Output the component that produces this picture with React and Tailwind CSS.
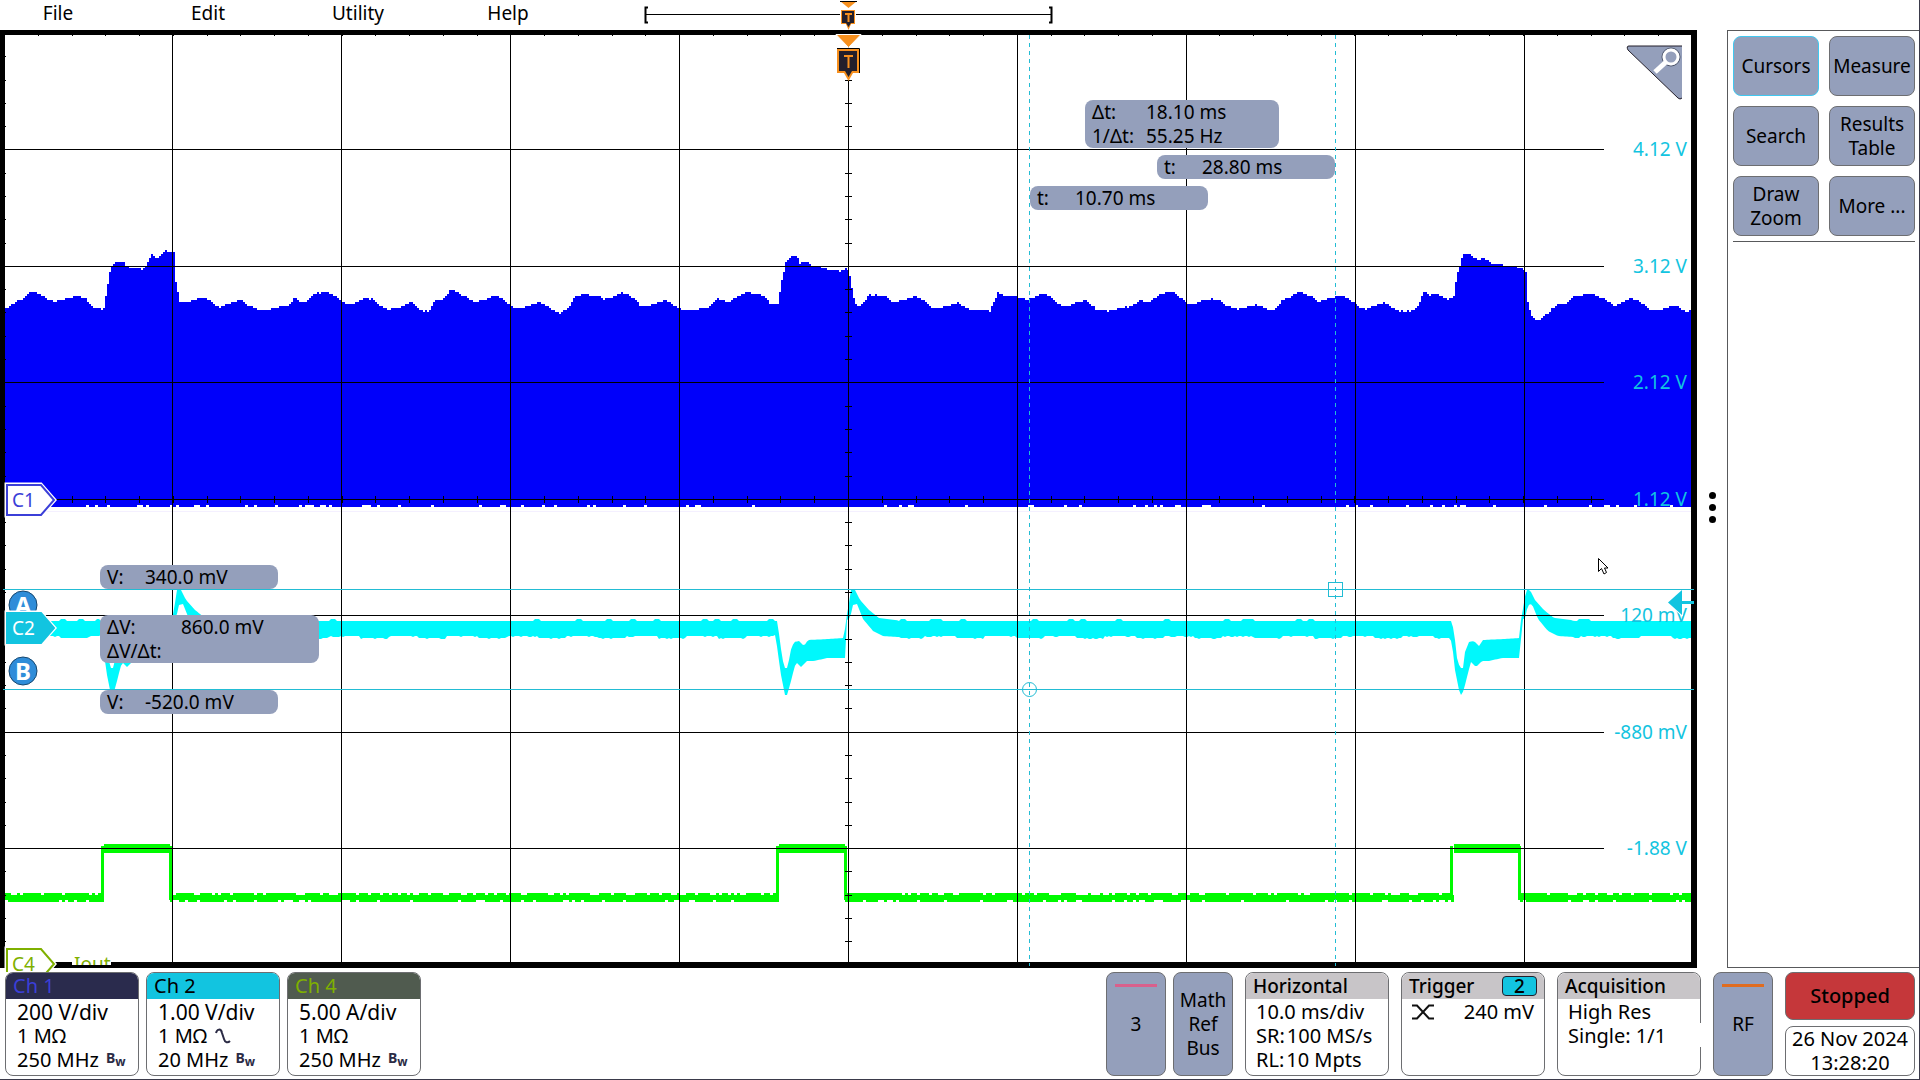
import { useMemo } from "react";

// plot area in screen units, all trace data below uses the same units
const PLOT = { x: 5, y: 35, w: 1686, h: 927 };

const COLUMNS = [172, 341, 510, 679, 848, 1017, 1186, 1355, 1524];
const ROWS = [149, 266, 382, 499, 615, 732, 848];

const C1_TOP = [
  [5, 309], [14, 302], [24, 298], [31, 291], [35, 292], [39, 294], [45, 298], [53, 302], [63, 300], [76, 296],
  [84, 298], [93, 308], [103, 309], [107, 283], [110, 266], [116, 261], [122, 262], [126, 267], [141, 269], [145, 266],
  [151, 254], [157, 258], [163, 251], [173, 251], [175, 282], [179, 302], [188, 302], [198, 298], [206, 298], [218, 308],
  [227, 304], [240, 300], [249, 306], [261, 311], [273, 308], [288, 306], [293, 298], [300, 302], [306, 301], [312, 295],
  [324, 291], [333, 295], [345, 304], [355, 303], [363, 298], [371, 299], [380, 307], [388, 309], [398, 308], [411, 302],
  [420, 311], [428, 311], [433, 302], [443, 298], [451, 289], [461, 295], [475, 302], [495, 296], [502, 299], [510, 306],
  [518, 309], [538, 302], [545, 306], [559, 313], [567, 309], [575, 295], [594, 295], [604, 299], [622, 293], [633, 298],
  [640, 306], [648, 306], [664, 300], [679, 309], [689, 311], [709, 307], [716, 298], [728, 302], [738, 296], [747, 292],
  [762, 296], [769, 303], [777, 304], [782, 275], [785, 263], [791, 256], [796, 257], [799, 263], [807, 262], [811, 265],
  [820, 267], [824, 269], [840, 272], [846, 267], [849, 277], [853, 297], [856, 307], [860, 305], [868, 295], [885, 296],
  [893, 303], [915, 296], [922, 300], [934, 309], [958, 303], [966, 309], [989, 311], [997, 293], [1007, 297], [1013, 296],
  [1026, 300], [1042, 293], [1050, 297], [1062, 307], [1085, 300], [1095, 309], [1107, 311], [1132, 306], [1140, 300], [1148, 302],
  [1158, 295], [1171, 291], [1187, 304], [1195, 304], [1205, 299], [1218, 300], [1226, 306], [1236, 309], [1255, 305], [1271, 311],
  [1277, 307], [1280, 301], [1287, 298], [1298, 292], [1311, 296], [1318, 302], [1329, 298], [1339, 296], [1349, 299], [1358, 307],
  [1364, 309], [1384, 302], [1390, 307], [1398, 311], [1411, 311], [1417, 306], [1423, 292], [1429, 295], [1437, 294], [1447, 300],
  [1453, 297], [1456, 275], [1460, 263], [1462, 253], [1470, 254], [1476, 260], [1484, 258], [1490, 263], [1509, 266], [1521, 268],
  [1525, 273], [1527, 302], [1530, 315], [1536, 321], [1545, 315], [1557, 303], [1564, 305], [1572, 297], [1588, 293], [1598, 296],
  [1614, 306], [1629, 298], [1639, 301], [1649, 310], [1656, 311], [1675, 305], [1682, 311], [1691, 311],
];

// load step response on C2, x is relative to the start of the pulse
const STEP_TOP = [
  [0, 621], [3, 640], [5, 658], [8, 668], [11, 668], [13, 652], [17, 642], [22, 641], [27, 646], [31, 640],
  [52, 639], [67, 638], [69, 620], [72, 603], [74, 590], [78, 590], [83, 600], [92, 610], [102, 618], [119, 620], [122, 621],
];
const STEP_BOTTOM = [
  [-2, 635], [1, 652], [3, 670], [6, 685], [8, 695], [10, 695], [13, 685], [16, 673], [19, 662], [24, 667],
  [30, 661], [37, 661], [50, 658], [68, 658], [70, 620], [73, 618], [76, 605], [80, 604], [86, 619], [96, 631], [106, 636], [122, 637],
];
const STEPS = [103, 777, 1452];
const PULSES = [
  [103, 170],
  [778, 845],
  [1452, 1519],
];

const AXIS_LABELS = [
  { y: 149, text: "4.12 V" },
  { y: 266, text: "3.12 V" },
  { y: 382, text: "2.12 V" },
  { y: 499, text: "1.12 V" },
  { y: 615, text: "120 mV" },
  { y: 732, text: "-880 mV" },
  { y: 848, text: "-1.88 V" },
];

const READOUTS = [
  { x: 1085, y: 100, size: "w-[194px]", rows: [["Δt:", "18.10 ms"], ["1/Δt:", "55.25 Hz"]], label: "w-[54px]" },
  { x: 1157, y: 155, size: "w-[178px]", rows: [["t:", "28.80 ms"]], label: "w-[38px]" },
  { x: 1030, y: 186, size: "w-[178px]", rows: [["t:", "10.70 ms"]], label: "w-[38px]" },
  { x: 100, y: 565, size: "w-[178px]", rows: [["V:", "340.0 mV"]], label: "w-[38px]" },
  { x: 100, y: 615, size: "w-[219px]", rows: [["ΔV:", "860.0 mV"], ["ΔV/Δt:", ""]], label: "w-[74px]" },
  { x: 100, y: 690, size: "w-[178px]", rows: [["V:", "-520.0 mV"]], label: "w-[38px]" },
];

const CHANNELS = [
  { name: "Ch 1", head: "bg-[#2a2b4d] text-[#3b3fd8]", scale: "200 V/div", term: "1 MΩ", bw: "250 MHz" },
  { name: "Ch 2", head: "bg-[#12c4e0] text-black", scale: "1.00 V/div", term: "1 MΩ", bw: "20 MHz", ac: true },
  { name: "Ch 4", head: "bg-[#505b4f] text-[#7fb000]", scale: "5.00 A/div", term: "1 MΩ", bw: "250 MHz" },
];

const noise = (n) => {
  const v = Math.sin(n * 12.9898) * 43758.5453;
  return v - Math.floor(v);
};

const sample = (points, x) => {
  let i = 1;
  while (i < points.length - 1 && points[i][0] < x) i++;
  const [x0, y0] = points[i - 1];
  const [x1, y1] = points[i];
  const t = Math.min(1, Math.max(0, (x - x0) / (x1 - x0)));
  return y0 + (y1 - y0) * t;
};

const buildC1 = () => {
  let d = "M5 506";
  for (let x = 5; x < 1691; x += 2) {
    const y = Math.round((sample(C1_TOP, x) + noise(x) - 0.5) / 2) * 2;
    d += `V${y}H${Math.min(x + 2, 1691)}`;
  }
  for (let x = 1691; x > 5; x -= 3) {
    d += `V${noise(x + 7) > 0.86 ? 505 : 507}H${Math.max(x - 3, 5)}`;
  }
  return d + "Z";
};

const buildC2 = () => {
  const top = [];
  const bottom = [];
  for (let x = 5; x <= 1691; x += 2) {
    const start = STEPS.find((s) => x >= s - 2 && x <= s + 122);
    if (start !== undefined) {
      top.push([x, sample(STEP_TOP, x - start)]);
      bottom.push([x, sample(STEP_BOTTOM, x - start)]);
    } else {
      const swell = Math.sin(x / 9.5) > 0.1 ? 2 : 0;
      top.push([x, noise(Math.floor(x / 6)) > 0.85 ? 619 : 621]);
      bottom.push([x, 636 + swell + (noise(x) > 0.8 ? 1 : 0)]);
    }
  }
  return "M" + top.concat(bottom.reverse()).map((p) => p.join(" ")).join("L") + "Z";
};

const buildC4 = () => {
  let d = "";
  for (let x = 5; x < 1690; x += 3) {
    const high = PULSES.some(([a, b]) => x >= a && x < b);
    const top = (high ? 844 : 893) + (!high && noise(x) > 0.75 ? 2 : 0);
    const bottom = (high ? 853 : 902) - (!high && noise(x + 31) > 0.8 ? 2 : 0);
    d += `M${x} ${top}H${x + 3}V${bottom}H${x}Z`;
  }
  PULSES.forEach(([a, b]) => {
    d += `M${a - 2} 846H${a + 1}V900H${a - 2}ZM${b - 1} 846H${b + 2}V900H${b - 1}Z`;
  });
  return d;
};

const Graticule = () => {
  let ticks = "";
  for (let i = 1; i < 50; i++) {
    const x = Math.round(4 + i * 33.76) + 0.5;
    if (x < 1604) ticks += `M${x} 496V503`;
    ticks += `M${x} 35V36`;
  }
  for (let i = 1; i < 40; i++) {
    const y = Math.round(33 + i * 23.29) + 0.5;
    ticks += `M845 ${y}H852M5 ${y}H6`;
  }
  const lines =
    COLUMNS.map((x) => `M${x + 0.5} 35V962`).join("") + ROWS.map((y) => `M5 ${y + 0.5}H1604`).join("");
  return <path d={lines + ticks} stroke="#000" fill="none" />;
};

const ChannelTag = ({ y, text, fill, stroke, color }) => (
  <g>
    <path d={`M6 ${y - 16}H41L55 ${y}L41 ${y + 16}H6Z`} fill="#fff" stroke="#fff" strokeWidth="3" />
    <path d={`M7 ${y - 15}H41L54 ${y}L41 ${y + 15}H7Z`} fill={fill} stroke={stroke} strokeWidth="2" />
    <text x="12" y={y + 7} fontSize="19" fill={color}>
      {text}
    </text>
  </g>
);

const CursorBadge = ({ y, text }) => (
  <g>
    <circle cx="23" cy={y} r="14" fill="#2f8dd9" stroke="#17476e" />
    <text x="23" y={y + 9} fontSize="24" fontWeight="700" fill="#fff" textAnchor="middle">
      {text}
    </text>
  </g>
);

const Plot = () => {
  const traces = useMemo(() => ({ c1: buildC1(), c2: buildC2(), c4: buildC4() }), []);

  return (
    <svg
      viewBox={`${PLOT.x} ${PLOT.y} ${PLOT.w} ${PLOT.h}`}
      preserveAspectRatio="none"
      className="absolute inset-0 w-full h-full overflow-visible"
    >
      <path d="M5 511.5H1691" stroke="#f4f0ff" />
      <path d={traces.c1} fill="#0000fa" />
      <path d={traces.c2} fill="#00f8fc" />
      <path d={traces.c4} fill="#00fa00" />
      <Graticule />

      <g stroke="#22bcd4" fill="none">
        <path d="M1029.5 35V966M1335.5 35V966" strokeDasharray="4 4" />
        <path d="M3 589.5H1694M3 689.5H1694" />
        <circle cx="1029.5" cy="689.5" r="7" />
        <rect x="1328.5" y="582.5" width="14" height="14" />
      </g>

      <CursorBadge y={605} text="A" />
      <CursorBadge y={671} text="B" />
      <ChannelTag y={500} text="C1" fill="#fff" stroke="#3b3fd8" color="#3b3fd8" />
      <ChannelTag y={628} text="C2" fill="#12c4e0" stroke="#12c4e0" color="#fff" />
      <ChannelTag y={964} text="C4" fill="#fff" stroke="#7fb000" color="#7fb000" />
      <clipPath id="iout">
        <rect x="72" y="940" width="39" height="25" />
      </clipPath>
      <g clipPath="url(#iout)">
        <rect x="72" y="950" width="39" height="20" fill="#fff" />
        <text x="74" y="971" fontSize="19" fill="#7fb000">
          Iout
        </text>
      </g>

      {/* trigger position */}
      <path d="M836 34.500H861L848.500 47.500Z" fill="#f7901e" stroke="#fff" />
      <path d="M837 49H859V73H853L848.500 81L844 73H837Z" fill="#f7901e" />
      <path d="M837 48.500H859.500V73" stroke="#000" fill="none" />
      <path d="M839 51H857V71H852L848.500 77L845 71H839Z" fill="#231f2b" />
      <path d="M844 56H853M848.500 55V68" stroke="#f7901e" strokeWidth="2" fill="none" />

      {/* mouse pointer */}
      <path d="M1598.500 558.500V571.500L1601.500 568.500L1604 574L1606.500 572.500L1604.500 568H1608Z" fill="#fff" stroke="#000" />
    </svg>
  );
};

const TriggerLevel = () => (
  <svg viewBox="0 0 26 26" className="absolute -right-[3px] top-[555px] w-[26px] h-[26px]">
    <path d="M0 12.500L14 0V25Z" fill="#12c4e0" stroke="#fff" strokeWidth="2" paintOrder="stroke" />
    <path d="M13 12.500H26" stroke="#12c4e0" strokeWidth="3" />
  </svg>
);

const Readout = ({ x, y, size, rows, label }) => (
  <div
    className={`absolute ${size} rounded-lg bg-[#949fbb] px-[7px] text-[19px] leading-6 whitespace-pre`}
    style={{ left: `${((x - PLOT.x) / PLOT.w) * 100}%`, top: `${((y - PLOT.y) / PLOT.h) * 100}%` }}
  >
    {rows.map(([name, value]) => (
      <div key={name} className="flex">
        <span className={label}>{name}</span>
        <span>{value}</span>
      </div>
    ))}
  </div>
);

const SideButton = ({ children, active }) => (
  <button
    className={`h-[60px] rounded-lg border bg-[#949fbb] text-[19px] leading-6 ${
      active ? "border-[#40c8f0]" : "border-[#6d6e71]"
    }`}
  >
    {children}
  </button>
);

const ChannelCard = ({ name, head, scale, term, bw, ac }) => (
  <button className="w-[134px] overflow-hidden rounded-lg border border-[#6d6e71] bg-white text-left">
    <div className={`h-[26px] px-[7px] leading-[26px] ${head}`}>{name}</div>
    <div className="h-[76px] pt-px pl-[11px] text-[21px] leading-6 whitespace-nowrap">
      <div>{scale}</div>
      <div className="flex items-center gap-2 text-[20px]">
        {term}
        {ac && (
          <svg viewBox="0 0 16 16" className="w-4 h-4">
            <path d="M1 5C2 1 6 0 7 5L9 11C10 15 13 15 15 13" fill="none" stroke="#2b2b45" strokeWidth="2" />
          </svg>
        )}
      </div>
      <div className="flex items-center gap-[7px] text-[20px]">
        {bw}
        <span className="flex text-[14px] font-bold leading-4 text-[#2b2b45]">
          B<span className="pt-1 text-xs leading-4">w</span>
        </span>
      </div>
    </div>
  </button>
);

const InfoCard = ({ title, badge, children }) => (
  <button className="relative w-[144px] rounded-lg border border-[#6d6e71] bg-white text-left">
    <div className="flex h-[26px] items-center justify-between rounded-t-lg bg-[#c8c5c8] px-[7px] text-[19px] font-medium leading-[26px]">
      {title}
      {badge && (
        <span className="h-5 w-[35px] rounded-sm border border-[#231f2b] bg-[#12c4e0] text-center leading-[18px]">
          {badge}
        </span>
      )}
    </div>
    <div className="h-[76px] px-[10px] pt-px leading-6 whitespace-nowrap">{children}</div>
  </button>
);

const BlueButton = ({ bar, children }) => (
  <button className="relative w-[60px] rounded-lg border border-[#6d6e71] bg-[#949fbb] text-[19px] leading-6">
    {bar && <span className={`absolute left-2 right-2 top-[11px] h-[3px] ${bar}`} />}
    {children}
  </button>
);

const App = () => {
  return (
    <div className="flex h-screen min-h-[700px] flex-col overflow-hidden border-b border-r border-[#3a3a4a] bg-white font-['Noto_Sans','Open_Sans',sans-serif] text-black">
      <header className="flex h-[30px] shrink-0">
        <nav className="flex gap-[50px] pl-2">
          {["File", "Edit", "Utility", "Help"].map((item) => (
            <button key={item} className="w-[100px] pb-1 text-[19px] leading-6">
              {item}
            </button>
          ))}
        </nav>
        <svg viewBox="642 0 413 30" className="ml-[84px] h-[30px] w-[413px]">
          <path d="M648 7.500H645.500V22.500H648M1049 7.500H1051.500V22.500H1049" fill="none" stroke="#000" strokeWidth="2" />
          <path d="M646 14.500H840M856 14.500H1052" stroke="#000" />
          <path d="M840 1H857L848.500 8Z" fill="#f7901e" />
          <path d="M840 1.500H857" stroke="#000" />
          <path d="M841 10H855V24H851L848.500 30L846 24H841Z" fill="#f7901e" />
          <path d="M842 11H854V23H851L848.500 27L846 23H842Z" fill="#231f2b" />
          <path d="M845 14H852M848.500 14V22" stroke="#f7901e" strokeWidth="2" />
        </svg>
      </header>

      <div className="flex min-h-0 flex-1">
        <main className="relative min-w-0 flex-1 border-t-[5px] border-r-[6px] border-b-[6px] border-l-[5px] border-black">
          <Plot />
          {AXIS_LABELS.map((l) => (
            <span
              key={l.text}
              className="absolute right-1 -mt-3 text-[19px] leading-6 text-[#12c4e0]"
              style={{ top: `${((l.y - PLOT.y) / PLOT.h) * 100}%` }}
            >
              {l.text}
            </span>
          ))}
          <TriggerLevel />
          {READOUTS.map((r) => (
            <Readout key={r.y} {...r} />
          ))}
          <button aria-label="Zoom" className="absolute right-2 top-[10px]">
            <svg viewBox="0 0 57 55" className="h-[55px] w-[57px]">
              <path d="M56 1H3Q0 1 2 5L52 53Q56 56 56 52Z" fill="#949fbb" />
              <path d="M56 1H3Q0 1 2 5L52 53Q54 55 56 53" fill="none" stroke="#231f2b" />
              <circle cx="45" cy="12" r="9" fill="none" stroke="#4d5568" />
              <circle cx="45" cy="12" r="7" fill="none" stroke="#fff" strokeWidth="3" />
              <path d="M40 17L29 27" stroke="#fff" strokeWidth="5" />
            </svg>
          </button>
        </main>

        <button aria-label="Toggle results bar" className="flex w-[30px] flex-col items-center justify-center gap-[5px] pt-4">
          <span className="h-[7px] w-[7px] rounded-sm bg-black" />
          <span className="h-[7px] w-[7px] rounded-sm bg-black" />
          <span className="h-[7px] w-[7px] rounded-sm bg-black" />
        </button>

        <aside className="w-[192px] border border-r-0 border-[#58595b] pl-[5px] pr-1 pt-[5px]">
          <div className="grid grid-cols-2 gap-[10px] border-b border-[#58595b] pb-[5px]">
            <SideButton active>Cursors</SideButton>
            <SideButton>Measure</SideButton>
            <SideButton>Search</SideButton>
            <SideButton>
              Results
              <br />
              Table
            </SideButton>
            <SideButton>
              Draw
              <br />
              Zoom
            </SideButton>
            <SideButton>More ...</SideButton>
          </div>
        </aside>
      </div>

      <footer className="relative mt-1 flex h-[107px] shrink-0 justify-between bg-white pl-[5px] pr-1 pb-[3px] text-[20px]">
        <div className="flex gap-[7px]">
          {CHANNELS.map((c) => (
            <ChannelCard key={c.name} {...c} />
          ))}
        </div>

        <div className="flex gap-3">
          <div className="flex gap-[7px]">
            <BlueButton bar="bg-[#d9608c]">3</BlueButton>
            <BlueButton>
              Math
              <br />
              Ref
              <br />
              Bus
            </BlueButton>
          </div>
          <InfoCard title="Horizontal">
            <div>10.0 ms/div</div>
            <div className="flex gap-[2px]">
              <span>SR:</span>
              <span>100 MS/s</span>
            </div>
            <div className="flex gap-[2px]">
              <span>RL:</span>
              <span>10 Mpts</span>
            </div>
          </InfoCard>
          <InfoCard title="Trigger" badge="2">
            <div className="flex items-center justify-between">
              <svg viewBox="0 0 22 16" className="h-4 w-[22px]">
                <path d="M0 1.500H5L17 14.500H22M0 14.500H5L17 1.500H22" fill="none" stroke="#111" strokeWidth="2" />
              </svg>
              240 mV
            </div>
          </InfoCard>
          <InfoCard title="Acquisition">
            <div>High Res</div>
            <div>Single: 1/1</div>
            <span className="absolute -right-px top-[50px] h-6 w-px bg-white" />
          </InfoCard>
          <BlueButton bar="bg-[#e06c1f]">RF</BlueButton>
          <div className="flex w-[130px] flex-col gap-[6px]">
            <button className="flex-1 rounded-lg border border-[#6d6e71] bg-[#c5373a] font-medium">Stopped</button>
            <button className="flex-1 rounded-lg border border-[#6d6e71] bg-white text-[20px] leading-6 whitespace-nowrap">
              26 Nov 2024
              <br />
              13:28:20
            </button>
          </div>
        </div>
      </footer>
    </div>
  );
};

export default App;
